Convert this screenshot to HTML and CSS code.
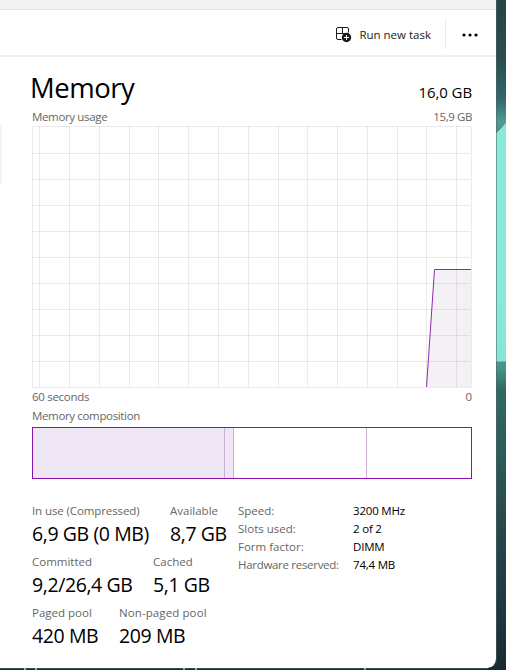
FILE: index.html
```html
<!DOCTYPE html>
<html lang="en">
<head>
    <meta charset="UTF-8">
    <meta name="viewport" content="width=device-width, initial-scale=1.0">
    <title>Task Manager</title>
    <link rel="stylesheet" href="styles.css">
</head>
<body>
    <div class="desktop">
        <div class="window">
            <div class="titlebar"></div>
            <div class="toolbar">
                <div class="run_task">
                    <svg width="16" height="16" viewBox="0 0 16 16">
                        <path d="M5.500 12.500H2A1.500 1.500 0 0 1 .5 11V2A1.500 1.500 0 0 1 2 .5h9A1.500 1.500 0 0 1 12.500 2v3.500M.5 6.500h12M6.500 .5v6" fill="none" stroke="#1b1b1b"/>
                        <circle cx="10.500" cy="10.500" r="4.700" fill="#1b1b1b"/>
                        <path d="M10.500 8v5M8 10.500h5" stroke="#fff"/>
                    </svg>
                    <span>Run new task</span>
                </div>
                <div class="more">
                    <svg width="16" height="4" viewBox="0 0 16 4">
                        <circle cx="2" cy="2" r="1.600"/>
                        <circle cx="8" cy="2" r="1.600"/>
                        <circle cx="14" cy="2" r="1.600"/>
                    </svg>
                </div>
            </div>
            <div class="content">
                <div class="nav_edge"></div>
                <div class="header">
                    <span class="title">Memory</span>
                    <span class="total">16,0 GB</span>
                </div>
                <div class="caption">
                    <span class="cap_usage">Memory usage</span>
                    <span class="cap_max">15,9 GB</span>
                </div>
                <!-- usage graph -->
                <svg class="graph" width="440" height="262" viewBox="0 0 440 262">
                    <path class="area" d="M394.500 261L402.500 143.500H439V261z"/>
                    <path class="grid" d="M7.500 0v261M37.500 0v261M67.500 0v261M97.500 0v261M126.500 0v261M156.500 0v261M186.500 0v261M216.500 0v261M246.500 0v261M275.500 0v261M305.500 0v261M335.500 0v261M365.500 0v261M394.500 0v261M424.500 0v261"/>
                    <path class="grid" d="M0 27.500h438M0 53.500h438M0 79.500h438M0 105.500h438M0 131.500h438M0 157.500h438M0 183.500h438M0 209.500h438M0 235.500h438"/>
                    <rect class="frame" x=".5" y=".5" width="439" height="261"/>
                    <path class="line" d="M394.500 261L402.500 143.500H439"/>
                </svg>
                <div class="caption axis">
                    <span class="cap_sec">60 seconds</span>
                    <span>0</span>
                </div>
                <div class="caption comp_label">
                    <span class="cap_comp">Memory composition</span>
                </div>
                <div class="composition">
                    <div class="used"></div>
                    <div class="modified"></div>
                    <div class="standby"></div>
                </div>
                <div class="details">
                    <div class="stats">
                        <div class="row">
                            <div class="stat in_use"><span class="label">In use (Compressed)</span><span class="value">6,9 GB (0 MB)</span></div>
                            <div class="stat"><span class="label">Available</span><span class="value">8,7 GB</span></div>
                        </div>
                        <div class="row">
                            <div class="stat committed"><span class="label">Committed</span><span class="value">9,2/26,4 GB</span></div>
                            <div class="stat"><span class="label">Cached</span><span class="value">5,1 GB</span></div>
                        </div>
                        <div class="row">
                            <div class="stat paged"><span class="label">Paged pool</span><span class="value">420 MB</span></div>
                            <div class="stat non_paged"><span class="label">Non-paged pool</span><span class="value">209 MB</span></div>
                        </div>
                    </div>
                    <div class="specs">
                        <span>Speed:</span><b>3200 MHz</b>
                        <span>Slots used:</span><b>2 of 2</b>
                        <span>Form factor:</span><b>DIMM</b>
                        <span class="hw">Hardware reserved:</span><b>74,4 MB</b>
                    </div>
                </div>
            </div>
        </div>
    </div>
</body>
</html>
```

FILE: styles.css
```css
*{
    box-sizing: border-box;
}
body{
    margin: 0;
    font-family: "Open Sans", "Noto Sans", sans-serif;
    font-size: 11.5px;
    color: #000;
}
svg{
    display: block;
}
span, b{
    white-space: nowrap;
}
.desktop{
    width: 506px;
    height: 670px;
    overflow: hidden;
    background:
        linear-gradient(#a3adae, #a3adae) 24px 668px / 2px 2px no-repeat,
        linear-gradient(#a3adae, #a3adae) 35px 668px / 2px 2px no-repeat,
        linear-gradient(#a3adae, #a3adae) 183px 668px / 2px 2px no-repeat,
        linear-gradient(#a3adae, #a3adae) 195px 668px / 2px 2px no-repeat,
        linear-gradient(#8d999b, #8d999b) 364px 668px / 2px 2px no-repeat,
        linear-gradient(#36504f, #36504f) 0 668px / 488px 1px no-repeat,
        linear-gradient(133deg, transparent 50%, #88e9d8 52%) 496px 122px / 10px 12px no-repeat,
        linear-gradient(#264448 0, #294e50 60px, #36686a 100px, #4f9c92 122px, #4d8e86 133px, #88e9d8 134px, #88e9d8 230px, #88e9d8 300px, #86e6d6 361px, #4b948c 362px, #47948b 368px, #326863 390px, #2c5c5b 450px, #29494d 520px, #203a42 600px, #192a33 670px);
}
.window{
    width: 497px;
    height: 668px;
    background-color: #fff;
    border-right: 1px solid rgba(80, 100, 105, .55);
    background-clip: padding-box;
    border-radius: 0 0 9px 0;
    overflow: hidden;
}
.titlebar{
    height: 10px;
    background-color: #f2f2f2;
    border-bottom: 1px solid #e3e3e3;
}
.toolbar{
    height: 47px;
    display: flex;
    justify-content: flex-end;
    border-bottom: 2px solid #f0f0f0;
    padding: 8px 0 6px;
}
.run_task{
    display: flex;
    align-items: center;
    gap: 7px;
    padding: 2px 14px 0 0;
    color: #1b1b1b;
}
.more{
    width: 51px;
    display: flex;
    align-items: center;
    padding: 2px 0 0 16px;
    border-left: 1px solid #ebebeb;
}
.content{
    position: relative;
    padding: 14px 24px 0 32px;
}
/* edge of the selected item in the left list */
.nav_edge{
    position: absolute;
    left: 0;
    top: 67px;
    width: 2px;
    height: 60px;
    background-color: #f5f5f5;
}
.header{
    height: 37px;
    display: flex;
    justify-content: space-between;
    line-height: 34px;
}
.title{
    font-size: 27.5px;
    letter-spacing: -.5px;
    margin-left: -2px;
}
.total{
    font-size: 15px;
    letter-spacing: -.1px;
    padding-top: 4px;
}
.caption{
    height: 18px;
    display: flex;
    justify-content: space-between;
    line-height: 18px;
    color: #666;
}
.cap_usage, .cap_comp{
    letter-spacing: -.35px;
}
.cap_sec{
    letter-spacing: -.3px;
}
.cap_max{
    letter-spacing: -.4px;
}
.graph .area{
    fill: #f4f1f5;
}
.graph .grid, .graph .frame{
    fill: none;
    stroke: #000;
    stroke-opacity: .08;
}
.graph .line{
    fill: none;
    stroke: #9128b0;
}
.axis{
    height: 19px;
}
.comp_label{
    height: 20px;
}
.composition{
    height: 52px;
    display: flex;
    border: 1px solid #8b12ae;
}
.used{
    width: 192px;
    border-right: 1px solid #d0aedb;
    background-color: #eee6f2;
}
.modified{
    width: 9px;
    border-right: 1px solid #d0aedb;
    background-color: #eee6f2;
}
.standby{
    width: 133px;
    border-right: 1px solid #d0aedb;
}
.details{
    display: flex;
    padding-top: 23px;
}
.stats{
    width: 206px;
}
.row{
    display: flex;
    height: 51px;
}
.stat{
    display: flex;
    flex-direction: column;
}
.in_use{
    width: 138px;
}
.in_use .label{
    letter-spacing: -.1px;
}
.committed{
    width: 121px;
}
.paged{
    width: 87px;
}
.non_paged .label{
    letter-spacing: .1px;
}
.label{
    line-height: 18px;
    color: #666;
}
.value{
    font-size: 19.5px;
    letter-spacing: -.4px;
    line-height: 28px;
}
.specs{
    display: grid;
    grid-template-columns: 115px auto;
    grid-auto-rows: 18px;
    line-height: 18px;
    color: #666;
}
.specs b{
    font-weight: normal;
    letter-spacing: -.2px;
    color: #000;
}
.specs .hw{
    letter-spacing: -.3px;
}
```
